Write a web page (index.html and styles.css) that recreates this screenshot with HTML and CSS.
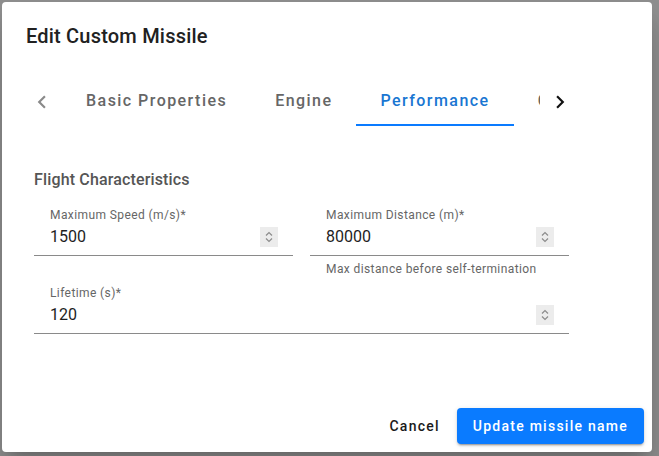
FILE: index.html
```html
<!DOCTYPE html>
<html>
<head>
<meta charset="utf-8">
<link rel="stylesheet" href="styles.css">
</head>
<body>
<div class="dialog">
  <h2 class="title">Edit Custom Missile</h2>
  <div class="tabs">
    <button class="scroll-btn scroll-left" aria-label="Scroll left">
      <svg viewBox="0 0 24 24" width="26" height="26"><path d="M15.41 16.59 10.83 12l4.58-4.59L14 6l-6 6 6 6z"/></svg>
    </button>
    <div class="tab-viewport">
      <div class="tab-list">
        <div class="tab">Basic Properties</div>
        <div class="tab">Engine</div>
        <div class="tab active">Performance</div>
        <div class="tab">Combat</div>
      </div>
    </div>
    <button class="scroll-btn scroll-right" aria-label="Scroll right">
      <svg viewBox="0 0 24 24" width="26" height="26"><path d="M8.59 16.59 13.17 12 8.59 7.41 10 6l6 6-6 6z"/></svg>
    </button>
  </div>
  <div class="content">
    <h3 class="section-title">Flight Characteristics</h3>
    <div class="grid">
      <div class="cell">
        <div class="field">
          <div class="label">Maximum Speed (m/s)*</div>
          <div class="value-row"><span class="value">1500</span><span class="spin"><svg viewBox="0 0 18 20" width="18" height="20"><path d="M6 8.5 9 5.5 12 8.5M6 11.5 9 14.5 12 11.5"/></svg></span></div>
        </div>
      </div>
      <div class="cell">
        <div class="field">
          <div class="label">Maximum Distance (m)*</div>
          <div class="value-row"><span class="value">80000</span><span class="spin"><svg viewBox="0 0 18 20" width="18" height="20"><path d="M6 8.5 9 5.5 12 8.5M6 11.5 9 14.5 12 11.5"/></svg></span></div>
        </div>
        <div class="helper">Max distance before self-termination</div>
      </div>
      <div class="cell wide">
        <div class="field">
          <div class="label">Lifetime (s)*</div>
          <div class="value-row"><span class="value">120</span><span class="spin"><svg viewBox="0 0 18 20" width="18" height="20"><path d="M6 8.5 9 5.5 12 8.5M6 11.5 9 14.5 12 11.5"/></svg></span></div>
        </div>
      </div>
    </div>
  </div>
  <div class="actions">
    <button class="btn btn-text">Cancel</button>
    <button class="btn btn-primary">Update missile name</button>
  </div>
</div>
</body>
</html>
```

FILE: styles.css
```css
* { box-sizing: border-box; }
html, body { margin: 0; }
body {
  width: 659px;
  height: 456px;
  padding: 2px;
  background: #8f8f8f;
  font-family: Roboto, "Liberation Sans", sans-serif;
  overflow: hidden;
}
.dialog {
  width: 650px;
  height: 450px;
  background: #fff;
  border-radius: 4px;
  box-shadow: 0 11px 15px -7px rgba(0,0,0,.2), 0 24px 38px 3px rgba(0,0,0,.14);
  display: flex;
  flex-direction: column;
}
.title {
  margin: 0;
  padding: 20px 24px 0;
  font-size: 20px;
  line-height: 28px;
  font-weight: 500;
  letter-spacing: 0.2px;
  color: #212121;
}
.tabs {
  margin: 28px 0 0 20px;
  width: 558px;
  height: 48px;
  display: flex;
}
.scroll-btn {
  width: 40px;
  height: 48px;
  flex: none;
  border: 0;
  padding: 0;
  background: none;
  display: flex;
  align-items: center;
  justify-content: center;
}
.scroll-left svg { fill: #8a8a8a; }
.scroll-right svg { fill: #111; }
.tab-viewport {
  flex: 1;
  overflow: hidden;
}
.tab-list {
  display: flex;
  height: 48px;
}
.tab {
  flex: none;
  height: 48px;
  padding: 0 24px 1px;
  display: flex;
  align-items: center;
  font-size: 16px;
  font-weight: 500;
  letter-spacing: 1.45px;
  color: #666;
  white-space: nowrap;
  border-bottom: 2px solid transparent;
}
.tab.active {
  color: #1976d2;
  border-bottom-color: #0a7bff;
}
.content {
  padding: 42px 0 0 32px;
}
.section-title {
  margin: 0;
  font-size: 16px;
  line-height: 24px;
  font-weight: 500;
  letter-spacing: 0.15px;
  color: #555;
}
.grid {
  margin-top: 15px;
  width: 535px;
  display: grid;
  grid-template-columns: 259px 259px;
  column-gap: 17px;
  row-gap: 8px;
}
.wide { grid-column: 1 / 3; }
.field {
  padding: 0 15px 6px 16px;
  border-bottom: 1px solid #8a8a8a;
}
.label {
  font-size: 12px;
  line-height: 16px;
  letter-spacing: 0.4px;
  color: #666;
}
.value-row {
  display: flex;
  align-items: center;
  justify-content: space-between;
  height: 24px;
  margin-top: 2px;
}
.value {
  font-size: 16px;
  line-height: 24px;
  color: #1e1e1e;
}
.spin {
  width: 18px;
  height: 20px;
  background: #ececec;
  display: flex;
}
.spin svg {
  fill: none;
  stroke: #8c8c8c;
  stroke-width: 1.2;
}
.helper {
  margin-top: 5px;
  padding-left: 16px;
  font-size: 12px;
  line-height: 16px;
  letter-spacing: 0.4px;
  color: #666;
}
.actions {
  margin-top: auto;
  padding: 8px;
  display: flex;
  justify-content: flex-end;
  gap: 9px;
}
.btn {
  height: 36px;
  border: 0;
  border-radius: 4px;
  font-family: Roboto, "Liberation Sans", sans-serif;
  font-size: 14px;
  font-weight: 500;
  letter-spacing: 1.25px;
  background: none;
}
.btn-text {
  padding: 0 8px;
  color: #1a1a1a;
}
.btn-primary {
  padding: 0 16px;
  background: #0a7bff;
  color: #fff;
  box-shadow: 0 3px 1px -2px rgba(0,0,0,.2), 0 2px 2px 0 rgba(0,0,0,.14), 0 1px 5px 0 rgba(0,0,0,.12);
}
```
